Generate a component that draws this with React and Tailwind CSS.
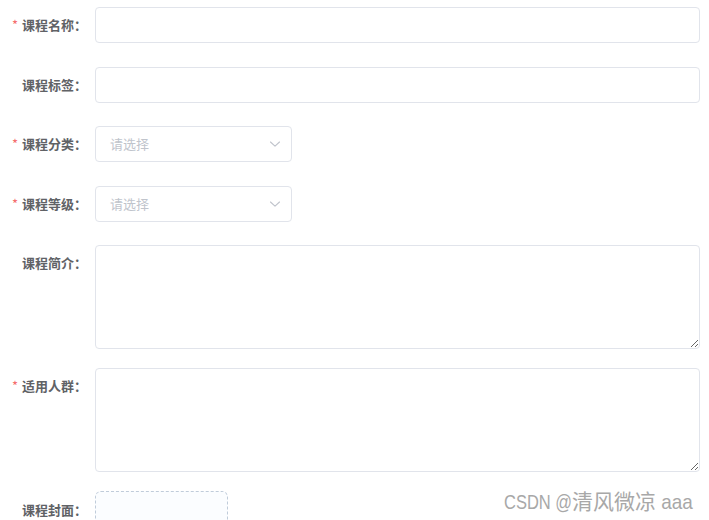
import React from "react";

const font = { fontFamily: '"Noto Sans CJK SC", "Noto Sans", sans-serif' };

function Label({ text, required }) {
  return (
    <div className="w-[95px] shrink-0 flex justify-end pr-[8px] h-[36px] items-center text-[13px] font-bold text-[#606266]">
      {required && <span className="text-[#f56c6c] mr-[4px] font-normal text-[13px]">*</span>}
      <span>{text}：</span>
    </div>
  );
}

function Chevron() {
  return (
    <svg width="12" height="12" viewBox="0 0 12 12" fill="none" className="text-[#c0c4cc]">
      <path d="M1.5 4 L6 8.2 L10.5 4" stroke="currentColor" strokeWidth="1.1" strokeLinecap="round" strokeLinejoin="round" />
    </svg>
  );
}

function SelectBox() {
  return (
    <div className="w-[197px] h-[36px] border border-[#e1e4eb] rounded-[4px] flex items-center justify-between pl-[14px] pr-[10px] bg-white">
      <span className="text-[13px] text-[#c0c4cc]">请选择</span>
      <Chevron />
    </div>
  );
}

export default function App() {
  const latin = { fontFamily: '"Liberation Sans", sans-serif' };
  const cjk = { fontFamily: '"Noto Sans CJK SC", sans-serif' };
  return (
    <div className="w-[709px] h-[520px] bg-white overflow-hidden relative" style={font}>
      <div className="flex flex-col pt-[7px]">
        <div className="flex">
          <Label text="课程名称" required />
          <input className="w-[605px] h-[36px] border border-[#e1e4eb] rounded-[4px] outline-none" />
        </div>
        <div className="flex mt-[24px]">
          <Label text="课程标签" />
          <input className="w-[605px] h-[36px] border border-[#e1e4eb] rounded-[4px] outline-none" />
        </div>
        <div className="flex mt-[23px]">
          <Label text="课程分类" required />
          <SelectBox />
        </div>
        <div className="flex mt-[24px]">
          <Label text="课程等级" required />
          <SelectBox />
        </div>
        <div className="flex mt-[23px]">
          <Label text="课程简介" />
          <textarea className="w-[605px] h-[104px] border border-[#e1e4eb] rounded-[4px] outline-none resize-y block" />
        </div>
        <div className="flex mt-[19px]">
          <Label text="适用人群" required />
          <textarea className="w-[605px] h-[104px] border border-[#e1e4eb] rounded-[4px] outline-none resize-y block" />
        </div>
        <div className="flex mt-[19px]">
          <div className="w-[95px] shrink-0 flex justify-end pr-[8px] pt-[9px] text-[13px] font-bold text-[#606266]">
            <span>课程封面：</span>
          </div>
          <div className="w-[133px] h-[60px] border border-dashed border-[#c0ccda] rounded-[6px] bg-[#fbfdff]" />
        </div>
      </div>
      <div
        className="absolute left-[504px] top-[490px] flex items-baseline text-[#a8a8a8] whitespace-nowrap leading-none"
        style={{ textShadow: "0 0 1px rgba(255,255,255,0.9)" }}
      >
        <span className="inline-block w-[68px] text-[21px]" style={latin}>
          <span className="inline-block origin-left scale-x-[0.785]">CSDN @</span>
        </span>
        <span className="text-[21px]" style={cjk}>清风微凉</span>
        <span className="inline-block w-[38px] text-[21px]" style={latin}>
          <span className="inline-block origin-left scale-x-[0.9]">&nbsp;aaa</span>
        </span>
      </div>
    </div>
  );
}
